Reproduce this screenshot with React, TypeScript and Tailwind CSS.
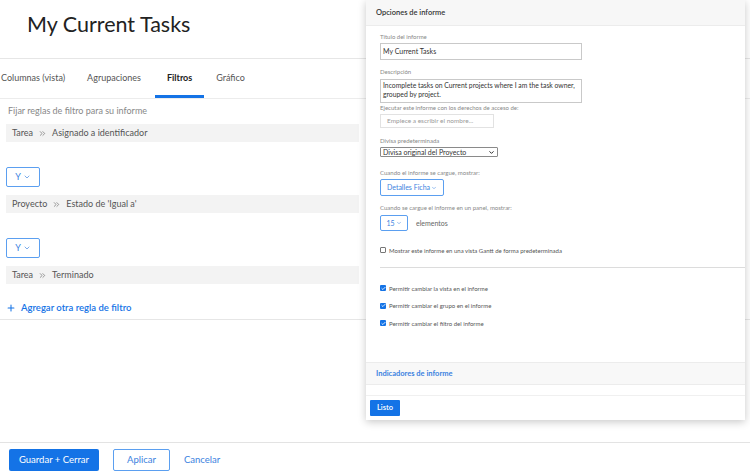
import { ChevronDown, Plus, ChevronsRight, Check } from "lucide-react";

const rules = [
  { left: "Tarea", right: "Asignado a identificador" },
  { left: "Proyecto", right: "Estado de 'Igual a'" },
  { left: "Tarea", right: "Terminado" },
];

function RuleRow({ left, right }: { left: string; right: string }) {
  return (
    <div className="h-[18px] bg-[#f3f3f3] flex items-center pl-[6px] text-[9px] text-[#555]">
      <span>{left}</span>
      <ChevronsRight className="w-[9px] h-[9px] mx-[5px] text-[#777]" strokeWidth={2} />
      <span>{right}</span>
    </div>
  );
}

function AndSelect() {
  return (
    <div className="w-[34px] h-[20px] border border-[#5b9ff0] rounded-[2px] flex items-center justify-center gap-[2px] text-[9px] text-[#3b82e0]">
      <span>Y</span>
      <ChevronDown className="w-[8px] h-[8px]" strokeWidth={2} />
    </div>
  );
}

function Label({ children }: { children: React.ReactNode }) {
  return <div className="text-[6px] text-[#888] leading-[8px]">{children}</div>;
}

function CheckBox({ checked, label }: { checked: boolean; label: string }) {
  return (
    <div className="flex items-center gap-[3px] h-[8px]">
      {checked ? (
        <div className="w-[6px] h-[6px] bg-[#1473e6] rounded-[1px] flex items-center justify-center">
          <Check className="w-[5px] h-[5px] text-white" strokeWidth={4} />
        </div>
      ) : (
        <div className="w-[6px] h-[6px] border border-[#777] rounded-[1px]" />
      )}
      <span className="text-[6px] text-[#555]">{label}</span>
    </div>
  );
}

function OptionsPanel() {
  return (
    <div className="absolute left-[366px] top-0 w-[379px] h-[420px] bg-white shadow-[0_2px_8px_rgba(0,0,0,0.22)] flex flex-col">
      <div className="h-[26px] bg-[#f7f7f7] border-b border-[#ececec] flex items-center pl-[10px] text-[7.5px] font-semibold text-[#333]">
        Opciones de informe
      </div>
      <div className="pl-[14px] flex flex-col">
        <div className="mt-[7px]"><Label>Titulo del informe</Label></div>
        <div className="mt-[2px] w-[202px] h-[17px] border border-[#c9c9c9] flex items-center pl-[2px] text-[7px] text-[#333]">
          My Current Tasks
        </div>
        <div className="mt-[8px]"><Label>Descripción</Label></div>
        <div className="mt-[3px] w-[202px] h-[24px] border border-[#c9c9c9] px-[2px] pt-[1px] text-[6.8px] leading-[9px] text-[#333] whitespace-nowrap">
          Incomplete tasks on Current projects where I am the task owner,
          <br />
          grouped by project.
        </div>
        <div className="mt-[1px]"><Label>Ejecutar este informe con los derechos de acceso de:</Label></div>
        <div className="mt-[2px] w-[114px] h-[14px] border border-[#e2e2e2] flex items-center pl-[6px] text-[6.5px] text-[#999]">
          Empiece a escribir el nombre...
        </div>
        <div className="mt-[9px]"><Label>Divisa predeterminada</Label></div>
        <div className="mt-[2px] w-[118px] h-[10px] border border-[#8a8a8a] rounded-[1px] flex items-center justify-between px-[2px] text-[7px] text-[#333]">
          <span>Divisa original del Proyecto</span>
          <ChevronDown className="w-[7px] h-[7px] text-[#111]" strokeWidth={3} />
        </div>
        <div className="mt-[12px]"><Label>Cuando el informe se cargue, mostrar:</Label></div>
        <div className="mt-[2px] w-[64px] h-[17px] border border-[#5b9ff0] rounded-[2px] flex items-center justify-center gap-[1px] text-[7px] text-[#3b82e0]">
          <span>Detalles Ficha</span>
          <ChevronDown className="w-[6px] h-[6px]" strokeWidth={2} />
        </div>
        <div className="mt-[8px]"><Label>Cuando se cargue el informe en un panel, mostrar:</Label></div>
        <div className="mt-[3px] flex items-center gap-[8px]">
          <div className="w-[28px] h-[16px] border border-[#5b9ff0] rounded-[2px] flex items-center justify-center gap-[1px] text-[7px] text-[#3b82e0]">
            <span>15</span>
            <ChevronDown className="w-[6px] h-[6px]" strokeWidth={2} />
          </div>
          <span className="text-[7px] text-[#666]">elementos</span>
        </div>
        <div className="mt-[15px]">
          <CheckBox checked={false} label="Mostrar este informe en una vista Gantt de forma predeterminada" />
        </div>
        <div className="mt-[13px] border-t border-[#dcdcdc]" />
        <div className="mt-[16px] flex flex-col gap-[9.5px]">
          <CheckBox checked label="Permitir cambiar la vista en el informe" />
          <CheckBox checked label="Permitir cambiar el grupo en el informe" />
          <CheckBox checked label="Permitir cambiar el filtro del informe" />
        </div>
      </div>
      <div className="mt-auto">
        <div className="h-[23px] bg-[#f8f8f8] border-t border-b border-[#ececec] flex items-center pl-[10px] text-[7.5px] font-bold text-[#3b82e0]">
          Indicadores de informe
        </div>
        <div className="h-[11px] border-b border-[#f0f0f0]" />
        <div className="h-[24px] pl-[4px] pt-[4px]">
          <div className="w-[30px] h-[16px] bg-[#1473e6] rounded-[1px] flex items-center justify-center text-[7.5px] font-semibold text-white">
            Listo
          </div>
        </div>
      </div>
    </div>
  );
}

export default function App() {
  return (
    <div className="relative w-[750px] h-[475px] bg-white overflow-hidden font-['Lato',sans-serif] flex flex-col">
      <div className="h-[58px] pl-[27px] pt-[8px]">
        <h1 className="text-[21.5px] text-[#222] leading-[32px]">My Current Tasks</h1>
      </div>
      <div className="border-t border-b border-[#e6e6e6]">
        <div className="h-[40px] border-b border-[#ececec] flex items-end text-[9px] text-[#555]">
          <div className="h-[40px] flex items-center pl-[1px] pr-[22px]">Columnas (vista)</div>
          <div className="h-[40px] flex items-center pr-[14px]">Agrupaciones</div>
          <div className="h-[40px] flex items-center px-[12px] font-bold text-[#222] border-b-[3px] border-[#1473e6] pt-[3px]">
            Filtros
          </div>
          <div className="h-[40px] flex items-center pl-[12px]">Gráfico</div>
        </div>
        <div className="w-[365px] px-[6px] pt-[5px] pb-[4px]">
          <div className="pl-[2px] text-[9px] text-[#888] h-[14px] leading-[14px]">
            Fijar reglas de filtro para su informe
          </div>
          <div className="mt-[6px]">
            <RuleRow {...rules[0]} />
          </div>
          <div className="mt-[25px]">
            <AndSelect />
          </div>
          <div className="mt-[8px]">
            <RuleRow {...rules[1]} />
          </div>
          <div className="mt-[25px]">
            <AndSelect />
          </div>
          <div className="mt-[8px]">
            <RuleRow {...rules[2]} />
          </div>
          <div className="mt-[17px] flex items-center gap-[5px] text-[9.5px] font-semibold text-[#1473e6]">
            <Plus className="w-[10px] h-[10px]" strokeWidth={2.5} />
            <span>Agregar otra regla de filtro</span>
          </div>
        </div>
      </div>
      <div className="flex-1" />
      <div className="h-[33px] border-t border-[#e3e3e3] flex items-start pt-[6px] pl-[9px] gap-[14px] text-[9.5px]">
        <div className="w-[90px] h-[22px] bg-[#1473e6] rounded-[2px] text-white flex items-center justify-center">
          Guardar + Cerrar
        </div>
        <div className="w-[57px] h-[22px] border border-[#5b9ff0] rounded-[2px] text-[#3b82e0] flex items-center justify-center">
          Aplicar
        </div>
        <div className="h-[22px] flex items-center text-[#3b82e0]">Cancelar</div>
      </div>
      <OptionsPanel />
    </div>
  );
}
